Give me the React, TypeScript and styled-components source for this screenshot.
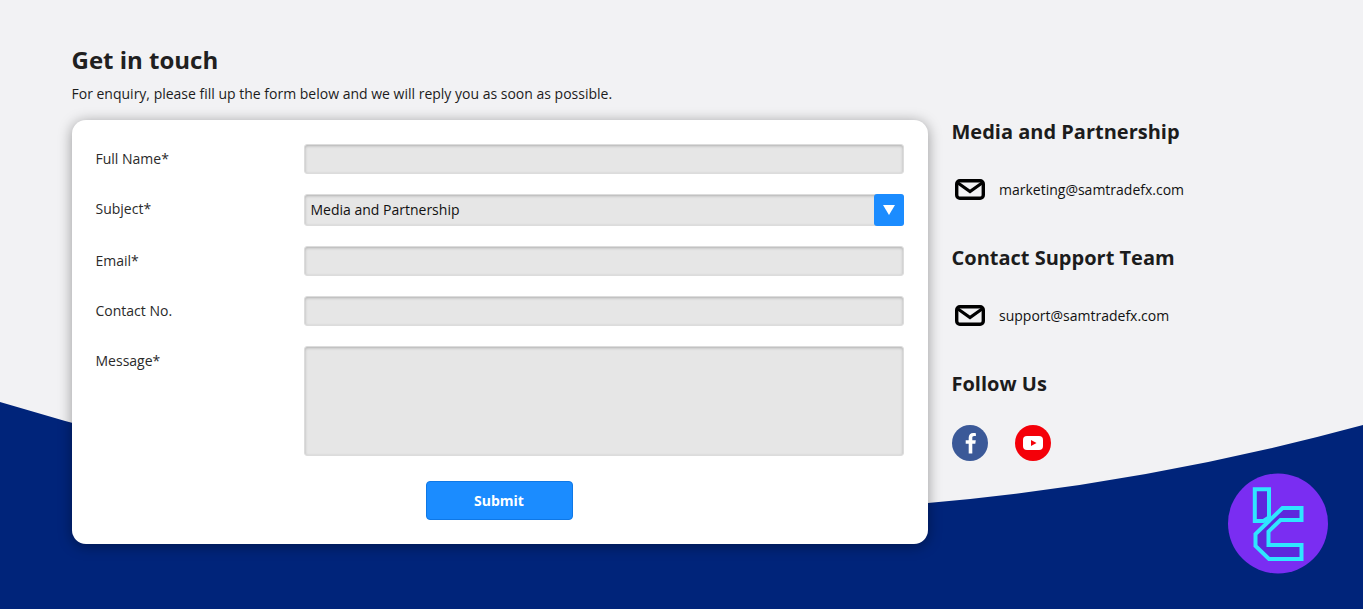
import React from "react";
import styled, { createGlobalStyle } from "styled-components";

const Global = createGlobalStyle`
  html, body { margin: 0; padding: 0; }
  body { font-family: "Open Sans", "Liberation Sans", sans-serif; background: #f2f2f4; color: #1c1c1c; }
`;

const Page = styled.div`
  position: relative;
  width: 1363px;
  height: 609px;
  overflow: hidden;
  box-sizing: border-box;
  padding: 43px 0 0 72px;
  background: #f2f2f4;
`;

const Wave = styled.svg`
  position: absolute;
  left: 0;
  top: 0;
  width: 1363px;
  height: 609px;
`;

const Content = styled.div`
  position: relative;
  display: flex;
  flex-direction: column;
`;

const Title = styled.h1`
  margin: 0 0 0 -0.5px;
  font-size: 24px;
  line-height: 33px;
  font-weight: 700;
  color: #202020;
`;

const Intro = styled.p`
  margin: 8px 0 0 -0.5px;
  font-size: 14px;
  line-height: 19px;
  color: #1c1c1c;
`;

const Columns = styled.div`
  display: flex;
  gap: 24px;
  margin-top: 17px;
`;

const Card = styled.form`
  width: 856px;
  height: 424px;
  box-sizing: border-box;
  padding: 24px;
  background: #fff;
  border-radius: 14px;
  box-shadow: 0 2px 14px rgba(0, 0, 0, 0.38);
  display: flex;
  flex-direction: column;
  gap: 20px;
`;

const Row = styled.div`
  display: grid;
  grid-template-columns: 208px 600px;
  align-items: start;
`;

const Label = styled.label`
  font-size: 14px;
  line-height: 19px;
  padding-top: 5px;
  margin-left: -0.5px;
  color: #2a2a2a;
`;

const Field = styled.div<{ $h: number }>`
  height: ${(p) => p.$h}px;
  box-sizing: border-box;
  background: #e6e6e6;
  border: 1px solid #dcdcdc;
  border-radius: 3px;
  box-shadow: inset 0 1px 3px rgba(0, 0, 0, 0.24);
`;

const Select = styled(Field)`
  position: relative;
  display: flex;
  align-items: center;
  padding: 0 0 2px 5.5px;
  font-size: 14px;
  color: #111;
`;

const Arrow = styled.span`
  position: absolute;
  right: -1px;
  top: -1px;
  width: 30px;
  height: 32px;
  background: #1b8cff;
  border-radius: 3px;
  display: flex;
  align-items: center;
  justify-content: center;
  &::after {
    content: "";
    width: 0;
    height: 0;
    border-left: 6px solid transparent;
    border-right: 6px solid transparent;
    border-top: 10px solid #fff;
  }
`;

const Actions = styled.div`
  display: flex;
  justify-content: center;
  margin-top: 5px;
  padding-right: 2px;
`;

const Submit = styled.button`
  width: 147px;
  height: 39px;
  background: #1b8cff;
  color: #fff;
  border: 1px solid #0f78e6;
  border-radius: 4px;
  font-family: inherit;
  font-size: 14px;
  font-weight: 700;
`;

const Side = styled.aside`
  display: flex;
  flex-direction: column;
  margin-top: -2px;
`;

const SideHeading = styled.h2`
  margin: 0 0 0 -0.5px;
  font-size: 20px;
  line-height: 27px;
  font-weight: 700;
  color: #1c1c1c;
`;

const SideBlock = styled.section`
  height: 126px;
`;

const MailRow = styled.div`
  display: flex;
  align-items: center;
  gap: 14px;
  margin-top: 33px;
  padding-left: 3px;
  font-size: 14px;
  line-height: 19px;
  color: #111;
`;

const MailSvg = styled.svg`
  margin-top: 1px;
  flex: none;
`;

const Socials = styled.div`
  display: flex;
  gap: 27px;
  margin-top: 28px;
`;

const Logo = styled.svg`
  position: absolute;
  left: 1228px;
  top: 473px;
  width: 100px;
  height: 101px;
`;

const MailIcon = () => (
  <MailSvg width="30" height="21" viewBox="0 0 30 21" fill="none">
    <rect x="1.7" y="1.7" width="26.6" height="17.6" rx="3.2" stroke="#000" strokeWidth="3.4" />
    <path d="M3 4l12 8.500 12-8.500" stroke="#000" strokeWidth="3.200" />
  </MailSvg>
);

const Facebook = () => (
  <svg width="36" height="36" viewBox="0 0 36 36">
    <circle cx="18" cy="18" r="18" fill="#3b5998" />
    <path
      d="M20.300 28.500v-9.800h3l.5-3.500h-3.500v-2.300c0-1.100.4-1.800 1.800-1.800h1.800V8.200c-.4 0-1.400-.2-2.700-.2-2.700 0-4.500 1.700-4.500 4.700v2.500h-3v3.500h3v9.800z"
      fill="#fff"
    />
  </svg>
);

const YouTube = () => (
  <svg width="36" height="36" viewBox="0 0 36 36">
    <circle cx="18" cy="18" r="18" fill="#f40009" />
    <rect x="8" y="11" width="20" height="14" rx="4" fill="#fff" />
    <path d="M16 15l5.500 3-5.500 3z" fill="#f40009" />
  </svg>
);

export default function App() {
  return (
    <Page>
      <Global />
      <Wave viewBox="0 0 1363 609">
        <path d="M0 402Q681.500 610 1363 425V609H0Z" fill="#00247a" />
      </Wave>
      <Content>
        <Title>Get in touch</Title>
        <Intro>For enquiry, please fill up the form below and we will reply you as soon as possible.</Intro>
        <Columns>
          <Card>
            <Row>
              <Label>Full Name*</Label>
              <Field $h={30} />
            </Row>
            <Row>
              <Label>Subject*</Label>
              <Select $h={32}>
                Media and Partnership
                <Arrow />
              </Select>
            </Row>
            <Row>
              <Label>Email*</Label>
              <Field $h={30} />
            </Row>
            <Row>
              <Label>Contact No.</Label>
              <Field $h={30} />
            </Row>
            <Row>
              <Label>Message*</Label>
              <Field $h={110} />
            </Row>
            <Actions>
              <Submit type="button">Submit</Submit>
            </Actions>
          </Card>
          <Side>
            <SideBlock>
              <SideHeading>Media and Partnership</SideHeading>
              <MailRow>
                <MailIcon />
                marketing@samtradefx.com
              </MailRow>
            </SideBlock>
            <SideBlock>
              <SideHeading>Contact Support Team</SideHeading>
              <MailRow>
                <MailIcon />
                support@samtradefx.com
              </MailRow>
            </SideBlock>
            <SideBlock>
              <SideHeading>Follow Us</SideHeading>
              <Socials>
                <Facebook />
                <YouTube />
              </Socials>
            </SideBlock>
          </Side>
        </Columns>
      </Content>
      <Logo viewBox="0 0 100 101">
        <circle cx="50" cy="50.500" r="50" fill="#7a2df2" />
        <path d="M26.800 16.300H41V44.500L35.500 48H26.800Z" fill="#5e27dc" stroke="#2fe6ff" strokeWidth="4" />
        <path
          d="M73.500 35H54.500L27.500 61V73L41 86H73.500V72H40.500V58.500L52.500 47H73.500Z"
          fill="#5e27dc"
          stroke="#2fe6ff"
          strokeWidth="4"
        />
      </Logo>
    </Page>
  );
}
